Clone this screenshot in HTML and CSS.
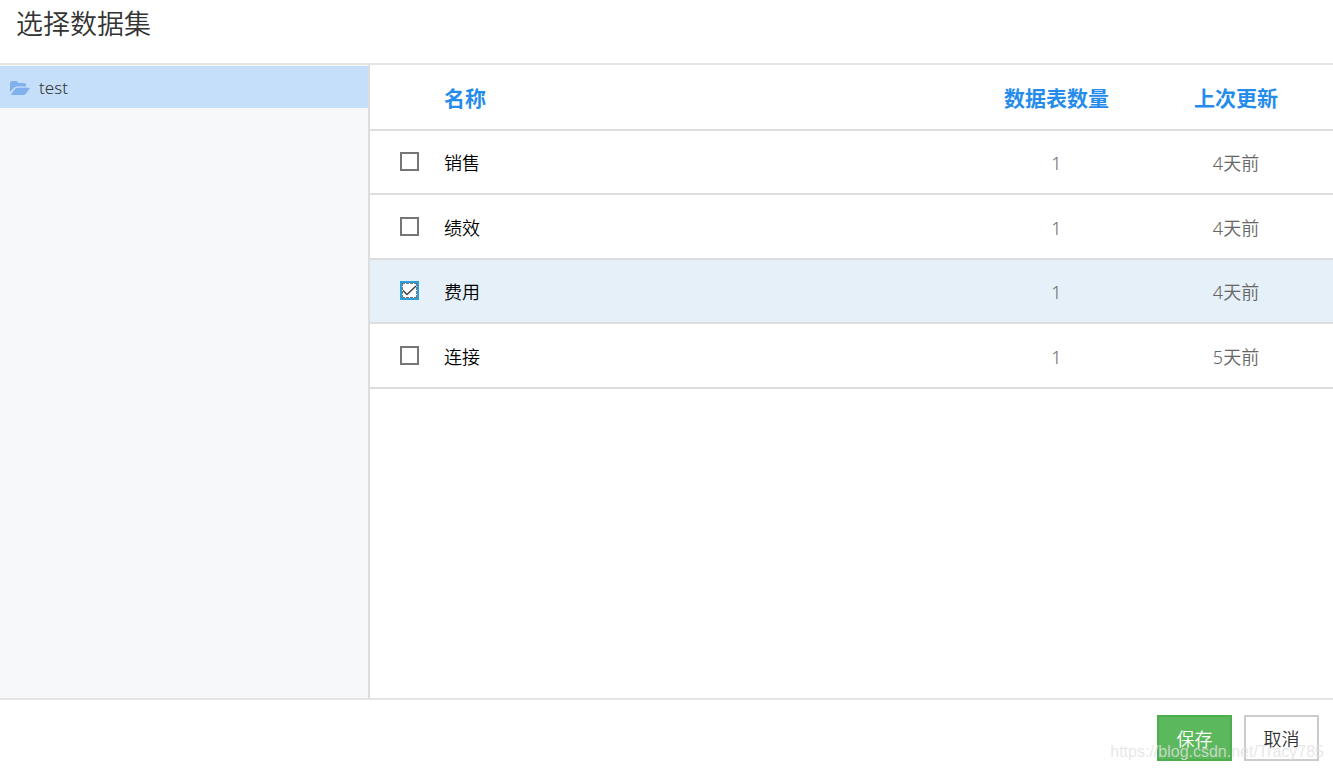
FILE: index.html
```html
<!DOCTYPE html>
<html lang="zh-CN">
<head>
    <meta charset="utf-8">
    <title>选择数据集</title>
    <link rel="stylesheet" href="styles.css">
</head>
<body>
    <header class="dialog-header">
        <h1>选择数据集</h1>
    </header>
    <main class="dialog-body">
        <nav class="folders">
            <a class="folder" href="#test">
                <svg class="folder-icon" viewBox="0 0 20 16" aria-hidden="true">
                    <path d="M0 12V3Q0 1 2 1h4q2 0 2 2h6q2 0 2 2v1.500H7q-2 0-3.300 1.500z"/>
                    <path d="M1 14.500L5 9q.800-1.200 2.300-1.200H19q1 0 .500.900l-3.700 5.100q-.900 1.200-2.300 1.200H1.500q-.700 0-.500-.500z"/>
                </svg>
                <span>test</span>
            </a>
        </nav>
        <section class="datasets">
            <table>
                <thead>
                    <tr>
                        <th class="check"></th>
                        <th class="name">名称</th>
                        <th class="count">数据表数量</th>
                        <th class="updated">上次更新</th>
                    </tr>
                </thead>
                <tbody>
                    <tr>
                        <td class="check"><input type="checkbox" id="ds1"></td>
                        <td class="name"><label for="ds1">销售</label></td>
                        <td class="count">1</td>
                        <td class="updated">4天前</td>
                    </tr>
                    <tr>
                        <td class="check"><input type="checkbox" id="ds2"></td>
                        <td class="name"><label for="ds2">绩效</label></td>
                        <td class="count">1</td>
                        <td class="updated">4天前</td>
                    </tr>
                    <tr class="selected">
                        <td class="check">
                            <span class="tick-box">
                                <input type="checkbox" id="ds3" checked>
                                <svg class="tick" viewBox="0 0 19 19" aria-hidden="true"><path d="M3 9.500L7 13.500L16 5"/></svg>
                            </span>
                        </td>
                        <td class="name"><label for="ds3">费用</label></td>
                        <td class="count">1</td>
                        <td class="updated">4天前</td>
                    </tr>
                    <tr>
                        <td class="check"><input type="checkbox" id="ds4"></td>
                        <td class="name"><label for="ds4">连接</label></td>
                        <td class="count">1</td>
                        <td class="updated">5天前</td>
                    </tr>
                </tbody>
            </table>
        </section>
    </main>
    <footer class="dialog-footer">
        <button type="button" class="btn save">保存</button>
        <button type="button" class="btn">取消</button>
        <span class="watermark">https://blog.csdn.net/Tracy785</span>
    </footer>
</body>
</html>
```
FILE: styles.css
```css
* {
    box-sizing: border-box;
}
body {
    display: flex;
    flex-direction: column;
    min-height: 100vh;
    margin: 0;
    background: #fff;
    color: #333;
    font-family: "Noto Sans", "Noto Sans CJK SC", sans-serif;
    font-size: 18px;
    font-weight: 350;
    line-height: 24px;
}
.dialog-header {
    padding: 4px 16px 19px;
    border-bottom: 2px solid #e5e5e5;
}
h1 {
    margin: 0;
    font-size: 27px;
    font-weight: 350;
    line-height: 40px;
}
.dialog-body {
    display: flex;
    flex: 1;
}
.folders {
    width: 370px;
    flex: none;
    padding-top: 1px;
    border-right: 2px solid #ddd;
    background: #f7f8fa;
}
.folder {
    display: flex;
    align-items: center;
    gap: 9px;
    height: 42px;
    padding: 2px 10px 0;
    background: #c5def9;
    color: #333;
    font-size: 17px;
    text-decoration: none;
}
.folder-icon {
    width: 20px;
    height: 16px;
    fill: #80b1ec;
}
.datasets {
    flex: 1;
}
table {
    width: 100%;
    table-layout: fixed;
    border-collapse: separate;
    border-spacing: 0;
}
th, td {
    height: 64px;
    padding: 2px 0 0;
    border-bottom: 2px solid #ddd;
    text-align: center;
    color: #666;
}
tr:nth-child(even) td {
    height: 65px;
}
th {
    height: 66px;
    color: #258cec;
    font-size: 21px;
    font-weight: 700;
}
td.check {
    padding-top: 0;
    padding-bottom: 1px;
}
.check {
    width: 74px;
    padding-left: 30px;
    text-align: left;
}
th.name, td.name {
    text-align: left;
}
td.name {
    color: #000;
}
.count {
    width: 165px;
}
.updated {
    width: 194px;
}
.selected td {
    background: #e5f0f9;
}
input[type="checkbox"] {
    display: block;
    width: 19px;
    height: 19px;
    margin: 0;
    appearance: none;
    border: 2px solid #767676;
    background: #fff;
}
input[type="checkbox"]:checked {
    border-color: #2a9fd8;
    outline: 1px dashed #767676;
    outline-offset: -3px;
}
.tick-box {
    display: block;
    position: relative;
    width: 19px;
}
.tick {
    position: absolute;
    inset: 0;
    fill: none;
    stroke: #444;
    stroke-width: 1.5;
    pointer-events: none;
}
.dialog-footer {
    display: flex;
    position: relative;
    justify-content: flex-end;
    gap: 12px;
    padding: 15px 14px 9px;
    border-top: 2px solid #e5e5e5;
}
.btn {
    width: 75px;
    height: 46px;
    padding: 2px 0 0;
    border: 2px solid #ccc;
    background: #fff;
    color: #333;
    font: inherit;
}
.save {
    border-color: #4cae4c;
    background: #5cb85c;
    color: #fff;
}
.watermark {
    position: absolute;
    right: 9px;
    bottom: 6px;
    color: rgba(225, 225, 225, 0.8);
    font-family: "Liberation Sans", sans-serif;
    font-size: 16px;
    pointer-events: none;
}
```
